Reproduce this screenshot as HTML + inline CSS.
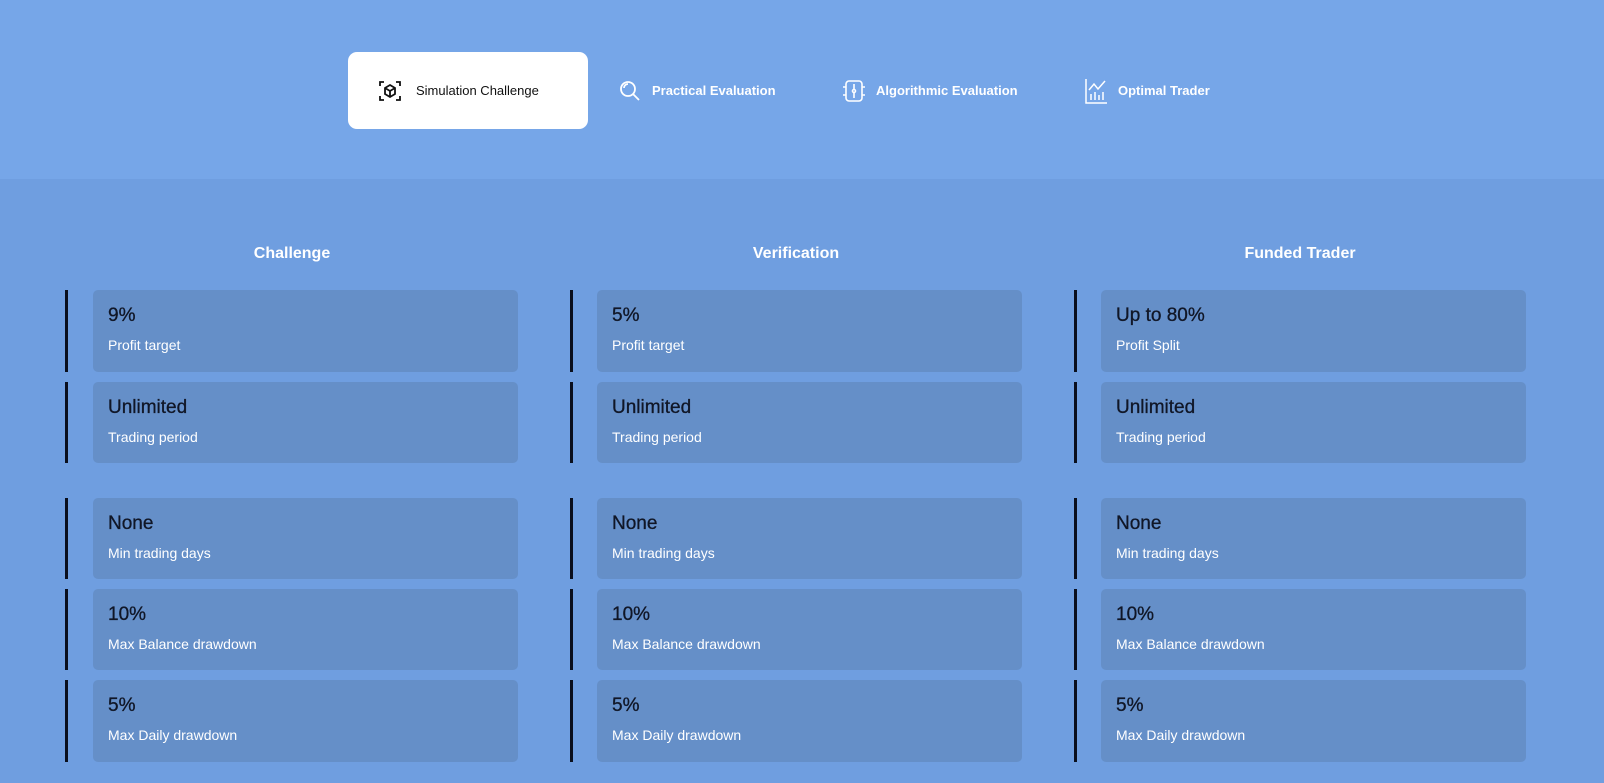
<!DOCTYPE html>
<html><head><style>
body{margin:0;width:1604px;height:783px;background:#6f9ee0;font-family:"Liberation Sans",sans-serif;position:relative;overflow:hidden}
.top{position:absolute;left:0;top:0;width:1604px;height:179px;background:#76a6e8}
.tab{position:absolute;top:52px;height:77px;display:flex;align-items:center;color:#fff;font-size:13px;font-weight:bold}
.tab svg{margin-right:10px}
.act{left:348px;width:240px;background:#fff;border-radius:9px;color:#111;font-weight:normal;box-sizing:border-box;padding-left:30px}
.act svg{margin-right:14px}
.title{position:absolute;top:245px;color:#fff;font-weight:bold;font-size:16px;width:300px;text-align:center}
.bar{position:absolute;width:3px;background:#0a0f1e}
.card{position:absolute;width:425px;background:#658fc8;border-radius:5px;box-sizing:border-box}
.v{position:absolute;left:15px;top:15px;font-size:19px;color:#101626;-webkit-text-stroke:0.3px #101626}
.l{position:absolute;left:15px;top:47px;font-size:14px;color:#fff}
</style></head><body>
<div class="top"></div>
<div class="tab act"><svg width="24" height="24" viewBox="0 0 24 24" fill="none" stroke="#111" stroke-width="1.8"><path d="M2 7V3h4M18 3h4v4M22 17v4h-4M6 21H2v-4"/><path d="M12 6l5 3v6l-5 3-5-3V9z M7 9l5 3 5-3 M12 12v6"/></svg>Simulation Challenge</div>
<div class="tab" style="left:618px"><svg width="24" height="24" viewBox="0 0 24 24" fill="none" stroke="#fff" stroke-width="1.8"><circle cx="10" cy="10" r="7"/><path d="M15 15l6 6M6 9a4 4 0 0 1 4-4"/></svg>Practical Evaluation</div>
<div class="tab" style="left:842px"><svg width="24" height="24" viewBox="0 0 24 24" fill="none" stroke="#fff" stroke-width="1.6"><rect x="4" y="2" width="16" height="20" rx="3"/><path d="M12 5v5M12 14v5M1 8h3M1 16h3M20 8h3M20 16h3"/><circle cx="12" cy="12" r="1.5"/></svg>Algorithmic Evaluation</div>
<div class="tab" style="left:1084px"><svg width="24" height="26" viewBox="0 0 24 26" fill="none" stroke="#fff" stroke-width="1.5"><path d="M2 1v24h21M5 12l5-6 4 5 7-8M7 22v-6M11 22v-8M15 22v-5M19 22v-8"/></svg>Optimal Trader</div>

<div class="title" style="left:142px">Challenge</div>
<div class="title" style="left:646px">Verification</div>
<div class="title" style="left:1150px">Funded Trader</div>

<div id="c"></div>
<script>
var cols=[[65,93],[570,597],[1074,1101]];
var rows=[[290,82],[382,81],[498,81],[589,81],[680,82]];
var data=[
[["9%","Profit target"],["Unlimited","Trading period"],["None","Min trading days"],["10%","Max Balance drawdown"],["5%","Max Daily drawdown"]],
[["5%","Profit target"],["Unlimited","Trading period"],["None","Min trading days"],["10%","Max Balance drawdown"],["5%","Max Daily drawdown"]],
[["Up to 80%","Profit Split"],["Unlimited","Trading period"],["None","Min trading days"],["10%","Max Balance drawdown"],["5%","Max Daily drawdown"]]];
var h="";
cols.forEach(function(c,i){rows.forEach(function(r,j){
h+='<div class="bar" style="left:'+c[0]+'px;top:'+r[0]+'px;height:'+r[1]+'px"></div>';
h+='<div class="card" style="left:'+c[1]+'px;top:'+r[0]+'px;height:'+r[1]+'px"><div class="v">'+data[i][j][0]+'</div><div class="l">'+data[i][j][1]+'</div></div>';
});});
document.getElementById("c").innerHTML=h;
</script>
</body></html>
